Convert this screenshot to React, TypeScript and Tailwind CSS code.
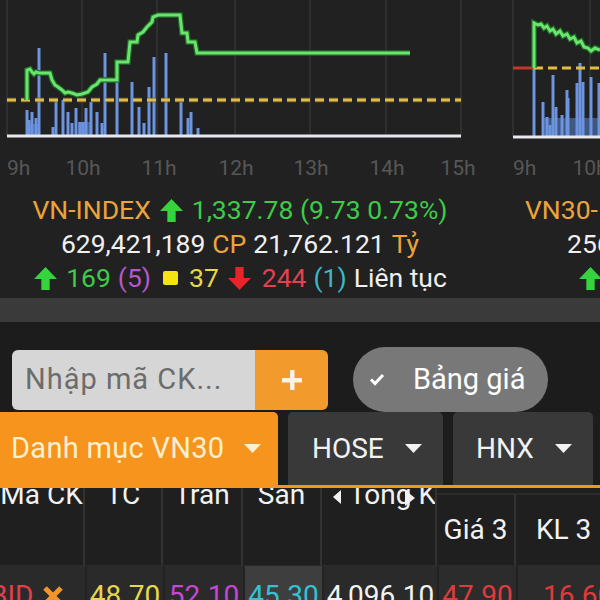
import React from "react";

const ArrowUp = ({ className }: { className?: string }) => (
  <svg viewBox="0 0 24 24" className={className}>
    <path d="M12 1 L23 12.5 L16 12.5 L16 23 L8 23 L8 12.5 L1 12.5 Z" fill="currentColor" />
  </svg>
);
const ArrowDown = ({ className }: { className?: string }) => (
  <svg viewBox="0 0 24 24" className={className}>
    <path d="M12 23 L23 11.5 L16 11.5 L16 1 L8 1 L8 11.5 L1 11.5 Z" fill="currentColor" />
  </svg>
);
const TriDown = ({ className }: { className?: string }) => (
  <svg viewBox="0 0 17 9" className={className}>
    <polygon points="0,0 17,0 8.5,9" fill="currentColor" />
  </svg>
);

const bars1: [number, number][] = [
  [27, 110], [29, 120], [32, 112], [36, 118], [39, 48], [53, 127], [56, 100], [63, 100], [68, 112],
  [72, 123], [76, 108], [80, 122], [83, 122], [86, 108], [91, 102], [97, 112], [102, 123], [105, 53],
  [117, 82], [132, 82], [139, 107], [144, 123], [149, 87], [154, 57], [166, 53], [181, 102], [188, 118],
  [191, 112], [198, 128],
];
const green1 =
  "M27 100 L27 70 L30 69 L32 72 L34 74 L36 72 L39 73 L50 73 L52 80 L55 85 L58 87 L62 90 L65 93 L68 92 L72 93 L77 95 L82 94 L88 92 L92 87 L97 84 L100 80 L117 80 L117 62 L128 62 L130 42 L137 42 L138 35 L143 32 L147 27 L152 22 L153 17 L158 15 L180 15 L182 33 L187 33 L188 42 L195 42 L197 53 L410 53";

const bars2: [number, number][] = [
  [28, 68], [37, 102], [41, 117], [44, 125], [47, 75], [50, 107], [56, 115], [61, 90], [62, 98],
  [71, 83], [74, 63], [77, 82], [85, 77], [93, 83],
];
const green2 =
  "M28 68 L28 23 L32 25 L35 24 L38 28 L41 26 L44 31 L47 29 L50 34 L54 31 L57 36 L61 34 L64 39 L68 37 L71 43 L75 41 L78 47 L82 48 L85 51 L89 48 L94 50";

const Chart1 = () => (
  <svg width="480" height="180" className="block">
    {[7, 82, 157, 235, 310, 386, 461].map((x) => (
      <line key={x} x1={x} y1={0} x2={x} y2={136} stroke="#3e3e3e" strokeWidth={1} />
    ))}
    <rect x={26} y={124} width={14} height={12} fill="#5b85d4" opacity={0.7} />
    <rect x={78} y={122} width={12} height={14} fill="#5b85d4" opacity={0.6} />
    {bars1.map(([x, t], i) => (
      <rect key={i} x={x - 1.5} y={t} width={3} height={136 - t} fill="#6d94de" />
    ))}
    <line x1={7} y1={100} x2={461} y2={100} stroke="#6b5a2a" strokeWidth={5} strokeDasharray="9 5" opacity={0.6} />
    <line x1={7} y1={100} x2={461} y2={100} stroke="#e2bd45" strokeWidth={3} strokeDasharray="9 5" />
    <path d={green1} fill="none" stroke="#1f6b25" strokeWidth={5.5} strokeLinejoin="miter" />
    <path d={green1} fill="none" stroke="#6ae46e" strokeWidth={3} strokeLinejoin="miter" />
    <rect x={7} y={134.5} width={454} height={3} fill="#e8e8ee" />
    <g fontFamily="Roboto, sans-serif" fontSize={21} fill="#575757">
      <text x={7} y={175}>9h</text>
      <text x={83} y={175} textAnchor="middle">10h</text>
      <text x={159} y={175} textAnchor="middle">11h</text>
      <text x={236} y={175} textAnchor="middle">12h</text>
      <text x={311} y={175} textAnchor="middle">13h</text>
      <text x={387} y={175} textAnchor="middle">14h</text>
      <text x={458} y={175} textAnchor="middle">15h</text>
    </g>
  </svg>
);

const Chart2 = () => (
  <svg width="480" height="180" className="block">
    {[7, 84, 161].map((x) => (
      <line key={x} x1={x} y1={0} x2={x} y2={137} stroke="#3e3e3e" strokeWidth={1} />
    ))}
    <rect x={36} y={118} width={60} height={19} fill="#5b85d4" opacity={0.55} />
    {bars2.map(([x, t], i) => (
      <rect key={i} x={x - 1.5} y={t} width={3} height={137 - t} fill="#6d94de" />
    ))}
    <line x1={7} y1={68} x2={27} y2={68} stroke="#c0392b" strokeWidth={3} />
    <line x1={28} y1={68} x2={480} y2={68} stroke="#e2bd45" strokeWidth={3} strokeDasharray="9 5" />
    <path d={green2} fill="none" stroke="#1f6b25" strokeWidth={5.5} />
    <path d={green2} fill="none" stroke="#6ae46e" strokeWidth={3} />
    <rect x={7} y={135.5} width={473} height={3} fill="#e8e8ee" />
    <g fontFamily="Roboto, sans-serif" fontSize={21} fill="#575757">
      <text x={7} y={175}>9h</text>
      <text x={84} y={175} textAnchor="middle">10h</text>
    </g>
  </svg>
);

export default function App() {
  return (
    <div className="w-[600px] h-[600px] overflow-hidden bg-[#212121] font-['Roboto',sans-serif]">
      {/* Index panels */}
      <div className="flex gap-[26px] h-[298px]">
        <div className="w-[480px] shrink-0 flex flex-col">
          <Chart1 />
          <div className="mt-[13px] flex flex-col text-[26.5px] leading-[34px] whitespace-nowrap">
            <div className="flex justify-center items-center">
              <span className="text-[#eca43a]">VN-INDEX</span>
              <ArrowUp className="w-[25px] h-[25px] mx-[8px] text-[#35d43f]" />
              <span className="text-[#3ccc48]">1,337.78 (9.73 0.73%)</span>
            </div>
            <div className="flex justify-center items-center gap-[7px]">
              <span className="text-[#f0f0f0]">629,421,189</span>
              <span className="text-[#eca43a]">CP</span>
              <span className="text-[#f0f0f0]">21,762.121</span>
              <span className="text-[#eca43a]">Tỷ</span>
            </div>
            <div className="flex justify-center items-center">
              <ArrowUp className="w-[25px] h-[25px] mr-[8px] text-[#35d43f]" />
              <span className="text-[#3ccc48]">169</span>
              <span className="text-[#b558c9] ml-[7px]">(5)</span>
              <span className="w-[15px] h-[14px] bg-[#f5e412] rounded-[2px] ml-[12px]" />
              <span className="text-[#e6d84a] ml-[11px]">37</span>
              <ArrowDown className="w-[25px] h-[25px] ml-[8px] mr-[10px] text-[#e8232a]" />
              <span className="text-[#e0424e]">244</span>
              <span className="text-[#3cb8c9] ml-[7px]">(1)</span>
              <span className="text-[#f0f0f0] ml-[7px]">Liên tục</span>
            </div>
          </div>
        </div>
        <div className="w-[480px] shrink-0 flex flex-col">
          <Chart2 />
          <div className="mt-[13px] flex flex-col text-[26.5px] leading-[34px] whitespace-nowrap">
            <div className="flex items-center pl-[19px]">
              <span className="text-[#eca43a]">VN30-INDEX</span>
              <ArrowUp className="w-[25px] h-[25px] mx-[8px] text-[#35d43f]" />
              <span className="text-[#3ccc48]">1,367.31 (10.97 0.81%)</span>
            </div>
            <div className="flex items-center pl-[61px] gap-[7px]">
              <span className="text-[#f0f0f0]">256,781,300</span>
              <span className="text-[#eca43a]">CP</span>
            </div>
            <div className="flex items-center pl-[72px]">
              <ArrowUp className="w-[25px] h-[25px] mr-[8px] text-[#35d43f]" />
              <span className="text-[#3ccc48]">21</span>
            </div>
          </div>
        </div>
      </div>

      {/* separator band */}
      <div className="h-[24px] bg-[#3a3a3a]" />

      {/* search + tabs */}
      <div className="bg-[#1c1c1c] pt-[25px]">
        <div className="flex items-center h-[65px] pl-[12px]">
          <div className="flex h-[60px]">
            <div className="w-[243px] bg-[#d6d6d6] rounded-l-[6px] flex items-center pl-[13px] text-[29px] text-[#6c6c6c] tracking-[1px]">
              Nhập mã CK...
            </div>
            <div className="w-[73px] bg-[#f39a2c] rounded-r-[6px] flex items-center justify-center">
              <svg width="22" height="22" viewBox="0 0 22 22">
                <rect x="9" y="1" width="4.5" height="20" fill="#fbf4e6" />
                <rect x="1" y="9" width="20" height="4.5" fill="#fbf4e6" />
              </svg>
            </div>
          </div>
          <div className="ml-[25px] w-[195px] h-[65px] rounded-full bg-[#787878] flex items-center pl-[16px]">
            <svg width="16" height="13" viewBox="0 0 16 13">
              <path d="M2 6.5 L6 10.5 L14 2" fill="none" stroke="#ffffff" strokeWidth="3" />
            </svg>
            <span className="ml-[28px] text-[29px] text-white">Bảng giá</span>
          </div>
        </div>
        <div className="flex h-[73px] whitespace-nowrap text-[28px]">
          <div className="w-[278px] shrink-0 bg-[#f7941e] rounded-tr-[5px] flex items-center pl-[11px] text-[29px] tracking-[0.3px] text-[#fdf0cf]">
            Danh mục VN30
            <TriDown className="w-[17px] h-[9px] ml-[20px] text-[#fdf0cf]" />
          </div>
          <div className="ml-[10px] w-[155px] shrink-0 bg-[#393939] rounded-t-[5px] flex items-center pl-[24px] text-[#f2f2f2]">
            HOSE
            <TriDown className="w-[17px] h-[9px] ml-[21px] text-[#f2f2f2]" />
          </div>
          <div className="ml-[10px] w-[140px] shrink-0 bg-[#393939] rounded-t-[5px] flex items-center pl-[23px] text-[#f2f2f2]">
            HNX
            <TriDown className="w-[17px] h-[9px] ml-[21px] text-[#f2f2f2]" />
          </div>
          <div className="ml-[10px] w-[120px] shrink-0 bg-[#393939] rounded-t-[5px]" />
        </div>
        <div className="h-[3px] bg-[#f7941e]" />
      </div>

      {/* table */}
      <div className="h-[112px] overflow-hidden bg-[#1f1f1f] text-[28px] whitespace-nowrap">
        <div className="-mt-[10px] flex h-[87px] leading-[34px] text-[#f2f2f2]">
          <div className="w-[85px] shrink-0 text-center border-r-2 border-[#333]">Mã CK</div>
          <div className="w-[78px] shrink-0 text-center border-r-2 border-[#333]">TC</div>
          <div className="w-[80px] shrink-0 text-center border-r-2 border-[#333]">Trần</div>
          <div className="w-[79px] shrink-0 text-center border-r-2 border-[#333]">Sàn</div>
          <div className="w-[115px] shrink-0 border-r-2 border-[#333] flex items-start overflow-hidden relative pl-[11px]">
            <svg width="8" height="14" viewBox="0 0 8 14" className="mt-[12px] shrink-0">
              <polygon points="8,0 8,14 0,7" fill="#f2f2f2" />
            </svg>
            <span className="ml-[8px]">Tổng KL</span>
            <svg width="10" height="16" viewBox="0 0 10 16" className="absolute left-[83px] top-[12px]">
              <polygon points="0,0 0,16 10,8" fill="#f2f2f2" />
            </svg>
          </div>
          <div className="flex flex-col">
            <div className="h-[17px] border-b-2 border-[#2c2c2c]" />
            <div className="flex flex-1">
              <div className="w-[79px] shrink-0 flex items-center justify-center border-r-2 border-[#333]">Giá 3</div>
              <div className="w-[96px] shrink-0 flex items-center pl-[20px]">KL 3</div>
            </div>
          </div>
        </div>
        <div className="flex h-[60px] border-t border-[#2a2a2a] items-center">
          <div className="w-[87px] shrink-0 h-full bg-[#2a2a2a] border-r-2 border-[#222] flex items-center">
            <span className="-ml-[10px] text-[#e0404a]">BID</span>
            <svg width="22" height="22" viewBox="0 0 22 22" className="ml-[9px]">
              <path d="M3 3 L19 19 M19 3 L3 19" stroke="#f2962b" strokeWidth="5" />
            </svg>
          </div>
          <div className="w-[78px] shrink-0 h-full bg-[#2a2a2a] border-r-2 border-[#222] flex items-center justify-center text-[#e6d84a]">48.70</div>
          <div className="w-[80px] shrink-0 h-full bg-[#2a2a2a] border-r-2 border-[#222] flex items-center justify-center text-[#c447d6]">52.10</div>
          <div className="w-[79px] shrink-0 h-full bg-[#3e3e3e] border-r-2 border-[#222] flex items-center justify-center text-[#33c2d3]">45.30</div>
          <div className="w-[115px] shrink-0 h-full bg-[#2a2a2a] border-r-2 border-[#222] flex items-center justify-center text-[#f2f2f2]">4,096.10</div>
          <div className="w-[79px] shrink-0 h-full bg-[#2c2c2c] border-r-2 border-[#222] flex items-center justify-center text-[#e03b3b]">47.90</div>
          <div className="w-[96px] shrink-0 h-full bg-[#2c2c2c] flex items-center pl-[25px] text-[#e03b3b]">16.60</div>
        </div>
      </div>
    </div>
  );
}
